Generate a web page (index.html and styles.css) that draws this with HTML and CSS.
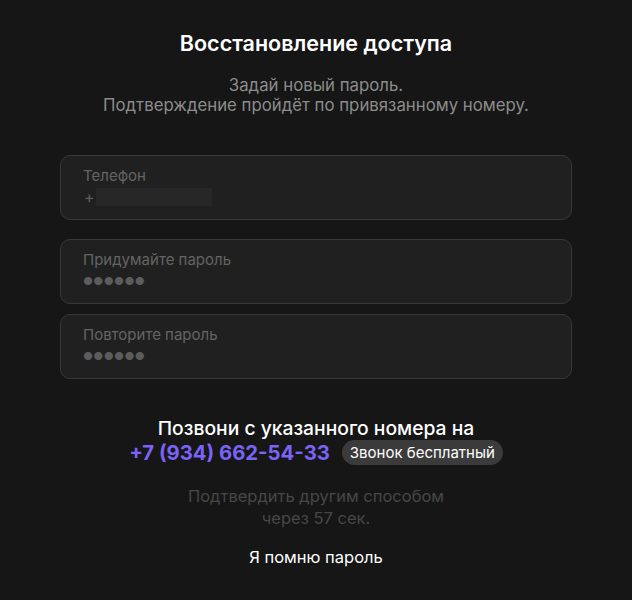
FILE: index.html
```html
<!DOCTYPE html>
<html>
<head>
    <meta charset="utf-8">
    <link rel="stylesheet" href="styles.css">
</head>
<body>

<div class="recovery">
    <h1>Восстановление доступа</h1>
    <p class="hint">Задай новый пароль.<br>Подтверждение пройдёт по привязанному номеру.</p>

    <!-- Fields -->
    <div class="fields">
        <div class="field">
            <label>Телефон</label>
            <div class="phone-value"><span class="plus">+</span><span class="masked"></span></div>
        </div>
        <div class="field gap-big">
            <label>Придумайте пароль</label>
            <div class="dots">●●●●●●</div>
        </div>
        <div class="field">
            <label>Повторите пароль</label>
            <div class="dots">●●●●●●</div>
        </div>
    </div>

    <!-- Call confirmation -->
    <div class="call">
        <div class="call-title">Позвони с указанного номера на</div>
        <div class="call-row">
            <span class="call-number">+7 (934) 662-54-33</span>
            <span class="badge">Звонок бесплатный</span>
        </div>
    </div>

    <p class="other">Подтвердить другим способом<br>через 57 сек.</p>

    <a class="remember" href="#">Я помню пароль</a>
</div>

</body>
</html>
```
FILE: styles.css
```css
/* General Styling */
body {
    font-family: Inter, "Noto Sans", sans-serif;
    margin: 0;
    padding: 0;
    background-color: #161616;
    color: #fff;
}

.recovery {
    width: 512px;
    margin: 0 auto;
    padding-top: 29px;
    display: flex;
    flex-direction: column;
    align-items: center;
}

h1 {
    font-size: 21.5px;
    font-weight: 600;
    margin: 0;
    line-height: 28px;
}

.hint {
    margin: 18px 0 0;
    color: #8c8c8c;
    font-size: 16.8px;
    line-height: 20px;
    text-align: center;
}

.fields {
    width: 100%;
    margin-top: 40px;
    display: flex;
    flex-direction: column;
}

.field {
    height: 65px;
    box-sizing: border-box;
    padding: 11px 22px 0;
    background: #202020;
    border: 1px solid #383838;
    border-radius: 10px;
    margin-bottom: 10px;
}

.field.gap-big {
    margin-top: 9px;
}

.field label {
    display: block;
    font-size: 15px;
    line-height: 18px;
    color: #646464;
}

.phone-value {
    display: flex;
    align-items: center;
    margin-top: 3px;
    height: 18px;
}

.plus {
    color: #5e5e5e;
    font-size: 16px;
    margin-left: 1px;
    width: 12px;
}

.masked {
    width: 116px;
    height: 18px;
    background: #272727;
}

.dots {
    margin-top: 5px;
    font-size: 11px;
    letter-spacing: 0.3px;
    color: #5c5c5c;
    line-height: 14px;
}

.call {
    margin-top: 27px;
    display: flex;
    flex-direction: column;
    align-items: center;
}

.call-title {
    font-size: 19.3px;
    font-weight: 500;
    line-height: 24px;
}

.call-row {
    display: flex;
    align-items: center;
    gap: 12px;
    margin-top: 0;
}

.call-number {
    font-size: 20.3px;
    font-weight: 700;
    color: #7a63f5;
}

.badge {
    background: #3b3b3b;
    border-radius: 13px;
    padding: 3px 8px;
    font-size: 15px;
    line-height: 19px;
    color: #fff;
}

.other {
    margin: 20px 0 0;
    color: #474747;
    font-size: 16.5px;
    line-height: 22px;
    text-align: center;
}

.remember {
    margin-top: 18px;
    color: #fff;
    text-decoration: none;
    font-size: 16.5px;
}
```
